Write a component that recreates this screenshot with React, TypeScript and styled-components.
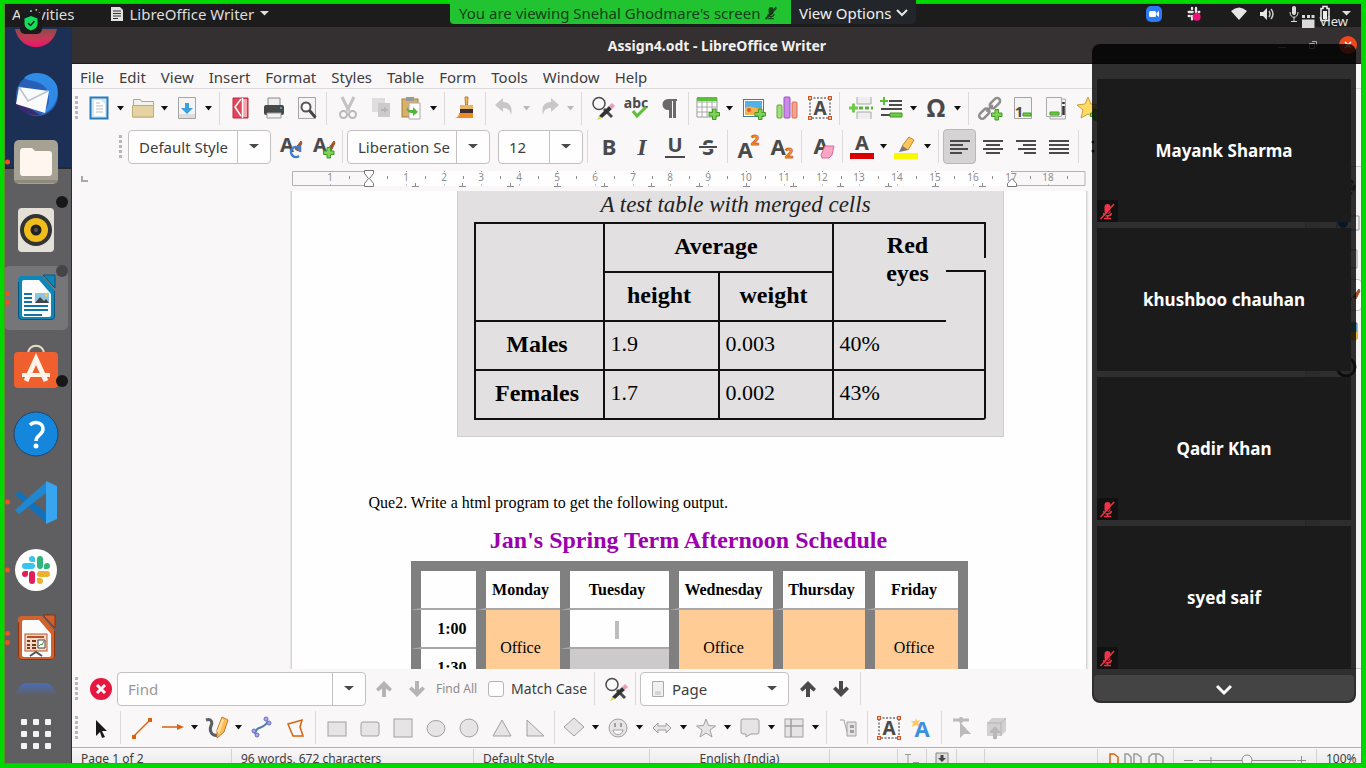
import React from "react";
import styled, { createGlobalStyle } from "styled-components";

const ui = `"Noto Sans", "Open Sans", sans-serif`;
const serif = `"Liberation Serif", serif`;
const ink = "#4a4a4b";

const Global = createGlobalStyle`
  *, *::before, *::after { box-sizing: border-box; }
  body { margin: 0; font-family: ${ui}; font-size: 14px; color: #3d3d3d; background: #f9f7f8; }
  button, input, select { font: inherit; color: inherit; }
  button { padding: 0; border: 0; background: none; }
  svg { display: block; flex: none; overflow: visible; }
`;

/* ---------- shell ---------- */
const Screen = styled.div`
  position: relative;
  display: flex;
  flex-direction: column;
  height: 100vh;
  overflow: hidden;
`;
const ShareFrame = styled.div`
  position: absolute;
  inset: 0;
  z-index: 3;
  pointer-events: none;
  border: 4px solid #00d900;
  border-top-width: 3px;
  box-shadow: inset 0 0 0 1px #5d8f2a;
`;
const TopBar = styled.header`
  display: flex;
  align-items: center;
  flex: none;
  height: 27px;
  padding: 0 15px 0 12px;
  color: #dedede;
  background: #1d1c1c;
  font-size: 15px;
  line-height: 20px;
`;
const TopButton = styled.button`
  display: flex;
  align-items: center;
  gap: 6px;
`;
const AppMenu = styled(TopButton)`
  margin-left: 35px;
`;
const Tray = styled.div`
  display: flex;
  align-items: center;
  margin-left: auto;
`;
const TrayButton = styled.button<{ $gap?: number }>`
  margin-left: ${(p) => p.$gap ?? 12}px;
`;
const Body = styled.div`
  display: flex;
  flex: 1;
  min-height: 0;
`;

/* ---------- dock ---------- */
const Dock = styled.nav`
  display: flex;
  flex-direction: column;
  flex: none;
  width: 72px;
  padding-left: 4px;
  border-right: 1px solid #2c2c2e;
  background: linear-gradient(#1c3055 0 140px, #26282f 140px 142px, #5f5f61 142px);
`;
const DockItem = styled.button<{ $h?: number; $active?: boolean }>`
  position: relative;
  display: flex;
  align-items: ${(p) => (p.$h ? "flex-start" : "center")};
  justify-content: center;
  flex: none;
  width: 64px;
  height: ${(p) => p.$h ?? 68}px;
  border: solid transparent;
  border-width: 2px 0;
  border-radius: 6px;
  background: ${(p) => (p.$active ? "#767678" : "none")};
  background-clip: padding-box;
`;
const Running = styled.span`
  position: absolute;
  left: 1px;
  display: grid;
  gap: 4px;
  top: 50%;
  transform: translateY(-50%);
  i { width: 5px; height: 5px; border-radius: 50%; background: #e95420; }
`;
const DarkDot = styled.span<{ $top: number; $soft?: boolean }>`
  position: absolute;
  right: 0;
  top: ${(p) => p.$top}px;
  width: 12px;
  height: 12px;
  border-radius: 50%;
  background: ${(p) => (p.$soft ? "#454547" : "#171717")};
`;

/* ---------- window ---------- */
const Window = styled.main`
  display: flex;
  flex-direction: column;
  flex: 1;
  min-width: 0;
  padding-right: 4px;
  background: #f9f7f8;
`;
const TitleBar = styled.div`
  display: grid;
  grid-template-columns: 1fr auto 1fr;
  align-items: center;
  flex: none;
  height: 37px;
  color: #f2f1f0;
  background: #343031;
  border-bottom: 1px solid #1f1c1d;
  h1 { grid-column: 2; margin: 2px 0 0; font-size: 14px; line-height: 20px; }
`;
const WinButtons = styled.div`
  display: flex;
  align-items: center;
  justify-content: flex-end;
  gap: 21px;
  padding-right: 5px;
`;
const MenuBar = styled.nav`
  display: flex;
  align-items: center;
  flex: none;
  gap: 15px;
  height: 25px;
  padding: 2px 8px 0;
  border-bottom: 1px solid #dcdadb;
  font-size: 15px;
  line-height: 20px;
`;
const Toolbar = styled.div<{ $indent?: number; $h?: number }>`
  display: flex;
  align-items: center;
  flex: none;
  height: ${(p) => p.$h ?? 39}px;
  padding-left: ${(p) => p.$indent ?? 3}px;
  overflow: hidden;
`;
const Handle = styled.span`
  flex: none;
  width: 3px;
  height: 24px;
  margin-right: 6px;
  background: repeating-linear-gradient(#b9b7b8 0 3px, transparent 3px 5px);
`;
const Plain = styled.button<{ $on?: boolean }>`
  display: grid;
  place-items: center;
  flex: none;
  width: 33px;
  height: 35px;
  border: 1px solid ${(p) => (p.$on ? "#b9b7b8" : "transparent")};
  border-radius: 4px;
  background: ${(p) => (p.$on ? "#d5d3d4" : "none")};
`;
const SplitMain = styled(Plain)`
  width: 29px;
`;
const SplitDrop = styled(Plain)`
  width: 15px;
`;
const Sep = styled.span`
  flex: none;
  width: 1px;
  height: 33px;
  margin: 0 4px 0 3px;
  background: #dcdadb;
`;
const Combo = styled.label<{ $w: number; $gap?: number }>`
  display: flex;
  align-items: center;
  flex: none;
  width: ${(p) => p.$w}px;
  height: 34px;
  margin-right: ${(p) => p.$gap ?? 2}px;
  border: 1px solid #c3c1c2;
  border-radius: 4px;
  background: #fefefe;
  font-size: 15px;
  overflow: hidden;
  select, input {
    flex: 1;
    min-width: 0;
    height: 100%;
    padding: 0 0 0 10px;
    border: 0;
    outline: 0;
    background: transparent;
    appearance: none;
  }
  input::placeholder { color: #9a9899; opacity: 1; }
`;
const ComboArrow = styled.span<{ $bare?: boolean }>`
  display: grid;
  place-items: center;
  width: 33px;
  height: 100%;
  border-left: 1px solid ${(p) => (p.$bare ? "transparent" : "#c3c1c2")};
`;
const FindAll = styled.button`
  margin: 0 11px 0 3px;
  font-size: 12px;
  color: #8e8c8d;
`;
const Check = styled.label`
  display: flex;
  align-items: center;
  gap: 7px;
  margin-right: 4px;
  input {
    width: 16px;
    height: 16px;
    margin: 0;
    border: 1px solid #b7b5b6;
    border-radius: 3px;
    background: #fff;
    appearance: none;
  }
`;

/* ---------- editor ---------- */
const EditorRow = styled.div`
  display: flex;
  flex: 1;
  min-height: 0;
`;
const Editor = styled.div`
  display: flex;
  flex-direction: column;
  flex: 1;
  min-width: 0;
`;
const RulerRow = styled.div`
  position: relative;
  display: flex;
  justify-content: center;
  flex: none;
  height: 25px;
  padding-top: 4px;
`;
const TabCorner = styled.button`
  position: absolute;
  left: 9px;
  top: 10px;
  width: 7px;
  height: 6px;
  border: solid #aaa8a9;
  border-width: 0 0 2px 2px;
`;
const Canvas = styled.div`
  display: flex;
  justify-content: center;
  flex: 1;
  min-height: 0;
  overflow: hidden;
`;
const Page = styled.article`
  flex: none;
  width: 794px;
  height: 1000px;
  background: #fefefe;
  box-shadow: 0 0 2px 1px #c6c4c5;
  color: #000;
  font-family: ${serif};
`;
const Figure = styled.div`
  width: 547px;
  height: 246px;
  margin-left: 165px;
  padding-left: 16px;
  border: 1px solid #cfcdce;
  border-top: 0;
  background: #e2e0e1;
`;
const line = "2px solid #111";
const Merged = styled.table`
  width: 512px;
  table-layout: fixed;
  border-collapse: separate;
  border-spacing: 0;
  border-bottom: ${line};
  border-radius: 0 0 3px 0;
  font-size: 22px;
  line-height: 28px;
  caption { padding-left: 12px; height: 31px; font-size: 23px; font-style: italic; color: #222; }
  tr { height: 49px; }
  th { font-size: 24px; padding: 0 4px 4px 0; }
  td { padding: 0 6px 4px; }
  th, td { border-left: ${line}; border-top: ${line}; }
  tbody td:last-child { border-right: ${line}; }
`;
const RedEyes = styled.th`
  position: relative;
  vertical-align: top;
  &&& { padding-top: 7px; }
  &::before {
    content: "";
    position: absolute;
    top: 46px;
    right: 0;
    bottom: 0;
    width: 40px;
    border: solid #111;
    border-width: 2px 2px 0 0;
  }
  &::after {
    content: "";
    position: absolute;
    top: 0;
    right: 0;
    width: 2px;
    height: 34px;
    background: #111;
  }
`;
const OpenTop = styled.td`
  &&& {
    border-top: 0;
    padding-top: 2px;
    background: linear-gradient(#111, #111) 0 0 / 112px 2px no-repeat;
  }
`;
const Question = styled.p`
  margin: 56px 0 0 77px;
  font-size: 16px;
  line-height: 20px;
`;
const Heading = styled.h2`
  margin: 13px 0 7px;
  font-size: 24px;
  line-height: 28px;
  text-align: center;
  color: #9b00ae;
`;
const wall = "10px solid #808080";
const Schedule = styled.table`
  width: 557px;
  margin-left: 119px;
  table-layout: fixed;
  border-collapse: separate;
  border-spacing: 0;
  border-top: ${wall};
  border-right: ${wall};
  font-size: 16px;
  line-height: 20px;
  tr { height: 39px; }
  th, td { padding: 0 4px 0 0; text-align: center; border-left: ${wall}; border-bottom: 2px solid #a9a7a8; }
  tbody th { padding-right: 9px; text-align: right; }
`;
const Busy = styled.td`
  background: #ffcc96;
`;
const Free = styled.td`
  background: #cccacb;
`;
const Cursor = styled.span`
  display: inline-block;
  width: 4px;
  height: 18px;
  vertical-align: middle;
  background: #bdbbbc;
`;
const Sidebar = styled.aside`
  display: flex;
  flex-direction: column;
  align-items: center;
  flex: none;
  width: 57px;
  padding: 4px 0 0 28px;
  gap: 4px;
  border: solid #c9c7c8;
  border-width: 1px 0 1px 1px;
  background: linear-gradient(90deg, #e4e2e3 0 14px, #f4f2f3 14px);
`;
const Deck = styled.button<{ $on?: boolean }>`
  display: grid;
  place-items: center;
  flex: none;
  width: 28px;
  height: 32px;
  border: 1px solid ${(p) => (p.$on ? "#c3c1c2" : "transparent")};
  border-radius: 4px;
  background: ${(p) => (p.$on ? "#fff" : "none")};
`;

/* ---------- status ---------- */
const StatusBar = styled.footer`
  display: flex;
  flex: none;
  height: 21px;
  padding-top: 1px;
  border-top: 1px solid #b0aeaf;
  font-size: 12px;
  line-height: 20px;
  background: linear-gradient(#f9f7f8, #e9e7e8);
  overflow: hidden;
`;
const Cell = styled.div<{ $w: number; $grow?: boolean; $center?: boolean }>`
  display: flex;
  align-items: center;
  justify-content: ${(p) => (p.$center ? "center" : "flex-start")};
  flex: ${(p) => (p.$grow ? 1 : "none")} ;
  width: ${(p) => p.$w}px;
  height: 20px;
  min-width: 0;
  padding-left: ${(p) => (p.$center ? 0 : 9)}px;
  border-right: 1px solid #d3d1d2;
  white-space: nowrap;
`;

/* ---------- meeting overlays ---------- */
const ShareBanner = styled.div`
  position: absolute;
  z-index: 4;
  top: 0;
  left: 450px;
  display: flex;
  height: 24px;
  font-size: 15px;
  line-height: 24px;
  white-space: nowrap;
`;
const Viewing = styled.div`
  display: flex;
  align-items: center;
  gap: 5px;
  width: 341px;
  padding: 2px 0 0 9px;
  color: #17401b;
  background: #21c331;
  border-radius: 0 0 0 4px;
`;
const ViewOptions = styled.button`
  display: flex;
  align-items: center;
  gap: 5px;
  width: 125px;
  padding: 2px 0 0 8px;
  color: #f0f0f0;
  background: #22262a;
  border-radius: 0 0 4px 0;
`;
const Shield = styled.div`
  position: absolute;
  z-index: 4;
  top: 12px;
  left: 20px;
  display: grid;
  place-items: center;
  width: 22px;
  height: 22px;
  border-radius: 5px;
  background: #1a1a1d;
`;
const ViewMode = styled.button`
  position: absolute;
  z-index: 4;
  top: 12px;
  right: 18px;
  display: flex;
  align-items: center;
  gap: 5px;
  font-size: 13px;
  line-height: 18px;
  color: #e4e4e4;
`;
const Gallery = styled.aside`
  position: absolute;
  z-index: 2;
  top: 44px;
  right: 10px;
  display: flex;
  flex-direction: column;
  gap: 6px;
  width: 264px;
  padding: 35px 5px 2px;
  border-radius: 8px;
  background: rgba(0, 0, 0, 0.81);
`;
const Tile = styled.section`
  position: relative;
  display: grid;
  place-items: center;
  height: 143px;
  color: #fff;
  background: #1b1b1b;
  font-size: 17px;
  font-weight: 700;
  line-height: 24px;
`;
const Muted = styled.span`
  position: absolute;
  left: 0;
  bottom: 0;
  display: grid;
  place-items: center;
  width: 21px;
  height: 22px;
  background: #111;
`;
const More = styled.button`
  display: grid;
  place-items: center;
  height: 26px;
  margin: 0 -3px;
  padding-top: 4px;
  border-radius: 4px 4px 7px 7px;
  background: #444;
`;

/* ---------- icons ---------- */
type Kids = { children: React.ReactNode; s?: number };
const I = ({ children, s = 24 }: Kids) => (
  <svg width={s} height={s} viewBox="0 0 24 24" fill="none" aria-hidden="true">
    {children}
  </svg>
);
const Tri = ({ c = "#111", w = 7 }: { c?: string; w?: number }) => (
  <svg width={w} height="5" viewBox="0 0 7 5" preserveAspectRatio="none" aria-hidden="true">
    <path d="M0 0H7L3.5 4.5Z" fill={c} />
  </svg>
);
const Plus = ({ x = 12, y = 12 }: { x?: number; y?: number }) => (
  <path
    transform={`translate(${x} ${y})`}
    d="M4 .5h3.500v3.500h3.500v3.500h-3.500v3.500h-3.500v-3.500h-3.500v-3.500h3.500z"
    fill="#7fd257"
    stroke="#3f9a1f"
  />
);
const T = (p: { x: number; y: number; s: number; c?: string; t: string; i?: boolean; st?: string; f?: string }) => (
  <text
    x={p.x}
    y={p.y}
    fontSize={p.s}
    fontWeight="700"
    fontStyle={p.i ? "italic" : "normal"}
    fontFamily={p.f ?? "Noto Sans"}
    fill={p.c ?? ink}
    stroke={p.st}
    textAnchor="middle"
  >
    {p.t}
  </text>
);
const Corners = () => (
  <>
    <rect x="2" y="2" width="20" height="20" stroke="#333" strokeDasharray="2 1.500" />
    {[[2, 2], [22, 2], [2, 22], [22, 22]].map(([x, y]) => (
      <rect key={`${x}-${y}`} x={x - 1.5} y={y - 1.5} width="3" height="3" fill="#ffc08a" stroke="#d0562a" />
    ))}
  </>
);
const Lines = ({ r }: { r: number[][] }) => (
  <>
    {r.map(([x, y, w], k) => (
      <path key={k} d={`M${x} ${y}h${w}`} stroke={ink} strokeWidth="2" />
    ))}
  </>
);
const findReplace = (
  <>
    <circle cx="8" cy="7.500" r="6" stroke={ink} strokeWidth="1.500" />
    <path d="M13 13l8 8" stroke={ink} strokeWidth="3" />
    <path d="M8 20L18 10l3 3-10 9z" fill="#333" />
    <path d="M18 10l3-3 3 3-3 3z" fill="#e99ac0" />
    <path d="M8 20l3 2-5 2z" fill="#d9d94a" />
  </>
);
const undo = <path d="M2 9l8-7v4c7 0 10 5 8 13-1-5-3-7-8-7v4z" fill="#c9c7c8" />;
const up = <path d="M12 4l8 8-2.500 2.500-3.500-3V20h-4v-8.500l-3.500 3L4 12z" />;
const paper = <path d="M3.500 1.500h17v21h-17z" fill="#f4f4f4" stroke="#a5a5a5" />;
const pencil = (
  <>
    <path d="M1 4c5-2 7 2 5 6s0 11 8 9" stroke="#5a5f63" strokeWidth="3" />
    <path d="M12 14L17 1l6 3-4 12-7 6z" fill="#ffb955" stroke="#c57a2a" />
    <path d="M12 15l5-12 2 1-5 14z" fill="#ffdf9c" />
  </>
);
const brush = <path d="M17 14l6-8 1 2-4 8z" fill="#a0522d" stroke="#a0522d" />;

type Tool = { n: string; g: React.ReactNode; d?: boolean; on?: boolean; c?: string } | "|";
const Tools = ({ items }: { items: Tool[] }) => (
  <>
    {items.map((it, k) => {
      if (it === "|") return <Sep key={k} />;
      if (it.d)
        return (
          <React.Fragment key={k}>
            <SplitMain aria-label={it.n}><I>{it.g}</I></SplitMain>
            <SplitDrop aria-label={`${it.n} options`}><Tri c={it.c} /></SplitDrop>
          </React.Fragment>
        );
      return <Plain key={k} aria-label={it.n} $on={it.on}><I>{it.g}</I></Plain>;
    })}
  </>
);

const standard: Tool[] = [
  { n: "New", d: true, g: <><rect x="3.500" y="1.500" width="17" height="21" fill="#cfe6f5" stroke="#2a7ab8" strokeWidth="2" /><path d="M7 4h7l4 4v12H7z" fill="#fff" /><path d="M9 7h4M9 10h7M9 13h7M9 16h7" stroke="#bbb" /></> },
  { n: "Open", d: true, g: <><path d="M2.500 21V3.500h7l1 2h12V21z" fill="#f4f2ee" stroke="#b0a58f" /><path d="M1.500 9.500h21V21h-21z" fill="#e6d3a3" stroke="#c2ab74" /></> },
  { n: "Save", d: true, g: <>{paper}<path d="M4 18h16v4H4z" fill="#ddd" /><path d="M10 7h4v5h4l-6 6-6-6h4z" fill="#3c9fe0" /></> },
  "|",
  { n: "Export as PDF", g: <><path d="M4 2h15v20H4z" fill="#e0455a" stroke="#c0283f" /><path d="M14 3h4v18h-4z" fill="#f7a3ae" /><path d="M12 3L6 11l6 9M13.500 2v20" stroke="#fff" strokeWidth="1.500" /></> },
  { n: "Print", g: <><path d="M6 2h12v8H6z" fill="#eee" stroke="#888" /><rect x="2" y="9" width="20" height="10" rx="2" fill="#46484a" /><path d="M5 17h14v5H5z" fill="#f3f3f3" stroke="#999" /><circle cx="19" cy="12" r="1" fill="#3fc0f0" /></> },
  { n: "Print Preview", g: <>{paper}<circle cx="11" cy="11" r="4.500" stroke="#555" strokeWidth="2" fill="#fff" /><path d="M14.500 14.500l6 7" stroke="#444" strokeWidth="3" /></> },
  "|",
  { n: "Cut", g: <><path d="M6 1l7 14M18 1l-7 14" stroke="#c4c2c3" strokeWidth="3" /><circle cx="7.500" cy="18.500" r="3.500" stroke="#b9b7b8" strokeWidth="2" /><circle cx="16.500" cy="18.500" r="3.500" stroke="#b9b7b8" strokeWidth="2" /></> },
  { n: "Copy", g: <><path d="M3 2h13v14H3z" fill="#dfddde" /><path d="M9 7h12v14H9z" fill="#cccacb" /><path d="M12 13h3v-2l4 3-4 3v-2h-3z" fill="#b5b3b4" /></> },
  { n: "Paste", d: true, g: <><rect x="2" y="3" width="16" height="18" fill="#d9b06a" stroke="#a97f3a" /><rect x="6" y="1" width="8" height="4" fill="#999" /><path d="M9 7h11v16H9z" fill="#fff" stroke="#aaa" /><path d="M7 11c1 4 4 3 6 3v-3l5 5-5 4v-3c-5 0-7-2-6-6z" fill="#4fb53a" /></> },
  "|",
  { n: "Clone Formatting", g: <><path d="M11 1h3l-.5 8h-2z" fill="#f0b85a" stroke="#b9812c" /><path d="M6 9h13v5H6z" fill="#e7b565" /><path d="M6 13h13v4H6z" fill="#3a2e33" /><path d="M5 17h14v5H1c3-1 4-2 4-5z" fill="#f08a24" /></> },
  "|",
  { n: "Undo", d: true, c: "#bbb9ba", g: undo },
  { n: "Redo", d: true, c: "#bbb9ba", g: <g transform="matrix(-1 0 0 1 24 0)">{undo}</g> },
  "|",
  { n: "Find and Replace", g: findReplace },
  { n: "Spelling", g: <><T x={12} y={12} s={14} t="abc" /><path d="M9 15l4 5 9-9" stroke="#5cbf3a" strokeWidth="3" /></> },
  { n: "Formatting Marks", g: <path d="M20 3H11a5 5 0 0 0 0 11h1v8h3V5h1v17h3V5h1z" fill="#6a6a6b" /> },
  "|",
  { n: "Insert Table", d: true, g: <><path d="M1 2h20v19H1z" fill="#fff" stroke="#999" /><path d="M1 6h20M1 11h20M1 16h20M6 2v19M11 2v19M16 2v19" stroke="#aaa" /><path d="M1 1h20v4H1z" fill="#5cbf3a" /><Plus x={12.5} y={12.5} /></> },
  { n: "Insert Image", g: <><rect x="1.500" y="3.500" width="20" height="17" fill="#fff" stroke="#3a7cab" /><path d="M3 5h17v8H3z" fill="#4fb3e8" /><path d="M3 12c6-4 11 2 17 0v7H3z" fill="#f4b04a" /><circle cx="7" cy="14" r="2" fill="#e2582c" /><Plus x={12.5} y={12.5} /></> },
  { n: "Insert Chart", g: <><rect x="2" y="9" width="5" height="13" rx="1" fill="#a6dd7e" stroke="#5aa834" /><rect x="9" y="1" width="6" height="21" rx="1" fill="#c98be6" stroke="#9b4fc4" /><rect x="17" y="6" width="5" height="16" rx="1" fill="#f5a58e" stroke="#dd6a4b" /></> },
  { n: "Insert Text Box", g: <><Corners /><T x={12} y={19} s={19} t="A" /></> },
  "|",
  { n: "Page Break", g: <><path d="M8 1v7h14V1M8 23v-7h14v7" fill="#eee" stroke="#aaa" /><path d="M10 12h14" stroke="#58b336" strokeWidth="3" strokeDasharray="4 2" /><path d="M0 10.500h3v-3h3v3h3v3H6v3H3v-3H0z" fill="#6fc94a" /></> },
  { n: "Insert Field", d: true, g: <><Lines r={[[9, 5, 13], [9, 9, 13], [1, 13, 21], [1, 19, 9]]} /><path d="M0 4h3V1h2v3h3v2H5v3H3V6H0z" fill="#5cbf3a" /><path d="M10 17h12v4H10z" fill="#6fc94a" stroke="#3f9a1f" /></> },
  { n: "Special Character", d: true, g: <T x={12} y={21} s={25} t="Ω" /> },
  "|",
  { n: "Hyperlink", g: <><g transform="rotate(-45 12 12)" stroke="#8d8d8e" strokeWidth="2.500"><rect x="-2" y="9" width="12" height="6" rx="3" /><rect x="13" y="9" width="12" height="6" rx="3" /><path d="M7 12h9" /></g><Plus x={13} y={13} /></> },
  { n: "Footnote", g: <>{paper}<T x={8} y={21} s={15} t="1" /><path d="M12 17h8v3h-8z" fill="#6fc94a" stroke="#3f9a1f" /></> },
  { n: "Endnote", g: <><path d="M6 3h15.500v20H6z" fill="#eee" stroke="#aaa" /><path d="M2.500 1.500h15v19h-15z" fill="#f6f6f6" stroke="#aaa" /><path d="M6 16h9v3H6z" fill="#6fc94a" stroke="#3f9a1f" /><path d="M19.500 10v9M19.500 6v2" stroke="#333" strokeWidth="2.500" /></> },
  { n: "Bookmark", g: <><path d="M11 1l3 7 8 1-6 5 2 8-7-4-7 4 2-8-6-5 8-1z" fill="#ffdb62" stroke="#cf9a3c" /><Plus x={13} y={13} /></> },
];

const formatting: Tool[] = [
  { n: "Bold", g: <T x={12} y={20} s={22} t="B" /> },
  { n: "Italic", g: <T x={12} y={20} s={24} t="I" i f="Liberation Serif" /> },
  { n: "Underline", g: <><T x={12} y={17} s={20} t="U" /><path d="M2 22h20" stroke={ink} strokeWidth="2" /></> },
  { n: "Strikethrough", g: <><T x={12} y={20} s={22} t="S" /><path d="M3 12h18" stroke="#f9f7f8" strokeWidth="4" /><path d="M3 12h18" stroke={ink} strokeWidth="2" /></> },
  "|",
  { n: "Superscript", g: <><T x={8} y={23} s={22} t="A" /><T x={18} y={10} s={14} t="2" c="#f6a52c" st="#d9661a" /></> },
  { n: "Subscript", g: <><T x={8} y={20} s={22} t="A" /><T x={19} y={23} s={14} t="2" c="#f6a52c" st="#d9661a" /></> },
  "|",
  { n: "Clear Formatting", g: <><T x={10} y={19} s={22} t="A" /><path d="M10 20l4-9h9l-2 9-3 3h-7z" fill="#f8a5c6" stroke="#d96a9b" /></> },
  "|",
  { n: "Font Color", d: true, g: <><T x={12} y={15} s={20} t="A" /><path d="M0 18h24v6H0z" fill="#d90000" /></> },
  { n: "Highlighting", d: true, g: <><path d="M8 11l7-9 5 3-6 10z" fill="#fbc65a" stroke="#c4872e" /><path d="M8 11l6 4-4 1-5 1z" fill="#777" /><path d="M0 18h24v6H0z" fill="#f8f800" /></> },
  "|",
  { n: "Align Left", on: true, g: <Lines r={[[2, 6, 20], [2, 10, 13], [2, 14, 18], [2, 18, 12]]} /> },
  { n: "Center", g: <Lines r={[[2, 6, 20], [5, 10, 14], [2, 14, 20], [5, 18, 14]]} /> },
  { n: "Align Right", g: <Lines r={[[2, 6, 20], [9, 10, 13], [4, 14, 18], [10, 18, 12]]} /> },
  { n: "Justified", g: <Lines r={[[2, 6, 20], [2, 10, 20], [2, 14, 20], [2, 18, 20]]} /> },
  "|",
  { n: "Bullets", g: <><Lines r={[[9, 6, 14], [9, 10, 14], [9, 14, 14], [9, 18, 14]]} /><circle cx="5" cy="7" r="1.500" fill="#333" /><circle cx="5" cy="16" r="1.500" fill="#333" /></> },
];

const sh = { fill: "#e6e4e5", stroke: "#a19fa0" };
const drawing: Tool[] = [
  { n: "Select", g: <path d="M7 4v16l4-4 2 6 3-1-3-6h5z" fill="#1a1a1a" /> },
  "|",
  { n: "Line", g: <><path d="M4 20L20 4" stroke="#d9620f" strokeWidth="1.500" /><path d="M2 19h4v4H2zM18 2h4v4h-4z" fill="#d9620f" /></> },
  { n: "Arrow", d: true, g: <><path d="M1 11h16" stroke="#d9620f" strokeWidth="1.500" /><path d="M16 8l7 3-7 3z" fill="#d9620f" /></> },
  { n: "Curve", d: true, g: pencil },
  { n: "Connector", g: <><path d="M4 18C6 8 12 15 17 5" stroke="#4f7fa8" strokeWidth="2" /><circle cx="3" cy="15" r="2" fill="#a5a7ea" stroke="#6a6cc0" /><circle cx="6" cy="19" r="2" fill="#a5a7ea" stroke="#6a6cc0" /><circle cx="15" cy="3" r="2" fill="#a5a7ea" stroke="#6a6cc0" /><circle cx="18" cy="7" r="2" fill="#a5a7ea" stroke="#6a6cc0" /></> },
  { n: "Polygon", g: <path d="M4 8l14-4-2 7 3 9H9z" stroke="#d9620f" strokeWidth="1.500" /> },
  "|",
  { n: "Rectangle", g: <rect x="3" y="6" width="18" height="14" {...sh} /> },
  { n: "Rounded Rectangle", g: <rect x="3" y="6" width="18" height="14" rx="2" {...sh} /> },
  { n: "Square", g: <rect x="3" y="3" width="18" height="18" {...sh} /> },
  { n: "Ellipse", g: <ellipse cx="12" cy="12.500" rx="9" ry="8" {...sh} /> },
  { n: "Circle", g: <circle cx="12" cy="12" r="9" {...sh} /> },
  { n: "Triangle", g: <path d="M12 4l9 16H3z" {...sh} /> },
  { n: "Right Triangle", g: <path d="M4 4l17 16H4z" {...sh} /> },
  "|",
  { n: "Basic Shapes", d: true, g: <path d="M12 2l10 9-10 9-10-9z" {...sh} /> },
  { n: "Symbol Shapes", d: true, g: <><circle cx="12" cy="12" r="9" {...sh} /><path d="M7 14h10c-1 6-9 6-10 0z" fill="#fff" stroke="#a19fa0" /><path d="M9 7v4M15 7v4" stroke="#a19fa0" strokeWidth="2" /></> },
  { n: "Block Arrows", d: true, g: <path d="M3 12l5-5v3h8V7l5 5-5 5v-3H8v3z" {...sh} /> },
  { n: "Stars", d: true, g: <path d="M12 3l2.500 6.500 7 .5-5.500 4 2 7-6-4-6 4 2-7-5.500-4 7-.5z" {...sh} /> },
  { n: "Callouts", d: true, g: <path d="M5 3h14q2 0 2 2v11q0 2-2 2h-6l-5 3v-3H5q-2 0-2-2V5q0-2 2-2z" {...sh} /> },
  { n: "Flowchart", d: true, g: <><rect x="3" y="3" width="18" height="18" {...sh} /><path d="M9 3v18M3 10h18" stroke="#a19fa0" strokeWidth="1.500" /></> },
  "|",
  { n: "Callout Line", g: <><path d="M4 4h4l3 12h2" stroke="#a19fa0" /><path d="M11 6h9v14h-9z" {...sh} /><path d="M14 9h4v3h-4zM14 14h4v3h-4z" fill="#a19fa0" /></> },
  "|",
  { n: "Text Box", g: <><Corners /><T x={12} y={19} s={19} t="A" /></> },
  { n: "Fontwork", g: <><path d="M6 2l1 3 4-1-3 3 2 4-4-2-4 2 1-4-2-2 4 0z" fill="#ffc95e" /><T x={12} y={21} s={22} t="A" c="#3f8fe0" /></> },
  "|",
  { n: "Edit Points", g: <><path d="M2 4h16M10 1v6" stroke="#bbb" strokeWidth="3" /><path d="M9 6v16l4-4h7z" fill="#bbb" /></> },
  { n: "Extrusion", g: <><path d="M3 7l5-5h14v13l-5 5H3z" fill="#d2d0d1" /><path d="M3 7h14v13M17 7l5-5" stroke="#b5b3b4" /><path d="M11 10l6 7h-4v6H9v-6H5z" fill="#b9b7b8" /></> },
];

const MicOff = ({ c, s = 15 }: { c: string; s?: number }) => (
  <svg width={s} height={s + 2} viewBox="0 0 15 17" fill="none" aria-hidden="true">
    <rect x="4.500" y="1" width="6" height="10" rx="3" fill={c} />
    <path d="M3.500 10c1 4 7 4 8 0M7.500 12v3M4 15.500h7" stroke={c} strokeWidth="1.500" />
    <path d="M1.500 16.500L14.500 2.500" stroke="#111" strokeWidth="1.500" strokeOpacity="0.600" />
    <path d="M.5 16L14 1" stroke={c} strokeWidth="1.500" />
  </svg>
);

const SlackMark = () => (
  <>
    {[0, 90, 180, 270].map((r, k) => (
      <g key={r} transform={`rotate(${r} 24 24)`} fill={["#36c5f0", "#2eb67d", "#ecb22e", "#e01e5a"][k]}>
        <rect x="10" y="17" width="13" height="6" rx="3" />
        <path d="M23 16h-3a3 3 0 1 1 3-3z" />
      </g>
    ))}
  </>
);

const D = ({ children }: { children: React.ReactNode }) => (
  <svg width="48" height="48" viewBox="0 0 48 48" fill="none" aria-hidden="true">{children}</svg>
);
const officeDoc = (c: string, dark: string) => (
  <>
    <path d="M10 2h20l13 15v25q0 4-4 4H10q-4 0-4-4V6q0-4 4-4z" fill={c} />
    <path d="M31 1h12v13z" fill={c} stroke={dark} />
    <path d="M10 8q0-2 2-2h15l12 14v21q0 2-2 2H12q-2 0-2-2z" fill="#fcfcfc" />
    <path d="M6.500 8V42q0 3.500 3.500 3.500h29q3.500 0 3.500-3.500V17" stroke={dark} />
  </>
);

const ruler = Array.from({ length: 20 }, (_, k) => k - 1);
const Ruler = () => (
  <svg width="794" height="20" viewBox="0 0 794 20" fontFamily="Noto Sans" fontSize="10" textAnchor="middle" aria-label="Ruler">
    <rect x="76" y="1" width="644" height="15" fill="#fefefe" />
    <path d="M76 1.500H.5v14H76M720 1.500h73v14h-73" fill="none" stroke="#b3b1b2" />
    {ruler.map((n) => {
      const x = Math.round(76 + n * 37.8);
      return (
        <g key={n} stroke="none" fill="#8f8d8e">
          {n !== 0 && <text x={x} y="11">{Math.abs(n)}</text>}
          <path d={`M${x} 14.500h1v1h-1zM${x} 1h1v1h-1z`} />
          {x + 19 < 790 && <path d={`M${x + 19} 6h1v3h-1z`} />}
        </g>
      );
    })}
    {Array.from({ length: 13 }, (_, k) => Math.round(123 + k * 47.25)).map((x) => (
      <path key={x} d={`M${x - 3} 16.500h7M${x + 0.5} 13v4`} stroke="#8f8d8e" />
    ))}
    <path d="M72.500.5h9v3l-4 5 4 5v3h-9v-3l4-5-4-5z" fill="#fff" stroke="#777" />
    <path d="M715.500 16.500v-3l4.500-5 4.500 5v3z" fill="#fff" stroke="#777" />
  </svg>
);

const names = [
  { name: "Mayank Sharma", muted: true },
  { name: "khushboo chauhan", muted: false },
  { name: "Qadir Khan", muted: true },
  { name: "syed saif", muted: true },
];

export default function App() {
  return (
    <Screen>
      <Global />
      <TopBar>
        <TopButton>Activities</TopButton>
        <AppMenu>
          <svg width="14" height="14" viewBox="0 0 14 14" aria-hidden="true">
            <path d="M1 0h9l3 3v11H1z" fill="#e2e2e2" />
            <path d="M3 4h8M3 6.500h8M3 9h8M3 11.500h5" stroke="#333" />
          </svg>
          LibreOffice Writer
          <Tri c="#dedede" w={9} />
        </AppMenu>
        <Tray>
          <TrayButton aria-label="Zoom">
            <svg width="16" height="16" viewBox="0 0 16 16"><rect width="16" height="16" rx="5" fill="#2d7bf4" /><rect x="3" y="5" width="7" height="6" rx="1.500" fill="#fff" /><path d="M10.500 7L13 5v6l-2.500-2z" fill="#fff" /></svg>
          </TrayButton>
          <TrayButton aria-label="Slack" $gap={24}>
            <svg width="16" height="16" viewBox="0 0 48 48"><g stroke="#e8e8e8" strokeWidth="7" strokeLinecap="round"><path d="M8 18h12M18 6v3M30 6v12M38 18h2M8 30h3M18 30v10" /></g><circle cx="32" cy="32" r="12" fill="#f4107a" /></svg>
          </TrayButton>
          <TrayButton aria-label="Wi-Fi" $gap={29}>
            <svg width="16" height="14" viewBox="0 0 16 14"><path d="M0 4q8-7 16 0L8 13z" fill="#e6e6e6" /></svg>
          </TrayButton>
          <TrayButton aria-label="Volume">
            <svg width="16" height="14" viewBox="0 0 16 14" fill="none"><path d="M1 5h3l4-4v12L4 9H1z" fill="#e6e6e6" /><path d="M10 4q2 3 0 6M12 2q4 5 0 10" stroke="#c9c9c9" strokeWidth="1.500" /></svg>
          </TrayButton>
          <TrayButton aria-label="Microphone">
            <svg width="14" height="16" viewBox="0 0 14 16" fill="none"><rect x="5" y="0" width="4" height="9" rx="2" fill="#ddd" /><path d="M3 6c0 7 8 7 8 0M7 11v4M4 15.500h6" stroke="#ddd" /></svg>
          </TrayButton>
          <TrayButton aria-label="Battery" $gap={19}>
            <svg width="10" height="16" viewBox="0 0 10 16" fill="none"><path d="M1 2.500h2V.5h4v2h2v12H1z" stroke="#eee" strokeWidth="1.500" /><path d="M3 5h4v8H3z" fill="#eee" /></svg>
          </TrayButton>
          <TrayButton aria-label="System menu"><Tri c="#dedede" w={9} /></TrayButton>
        </Tray>
      </TopBar>

      <Body>
        <Dock aria-label="Dock">
          <DockItem $h={33} aria-label="Firefox">
            <svg width="44" height="20" viewBox="0 0 44 20"><defs><linearGradient id="fox" x2="0" y2="1"><stop stopColor="#8a4a4c" /><stop offset="0.500" stopColor="#c43a55" /><stop offset="1" stopColor="#f0106a" /></linearGradient></defs><path d="M1 0h42c-2 10-10 18-21 18S3 10 1 0z" fill="url(#fox)" /></svg>
          </DockItem>
          <DockItem aria-label="Thunderbird">
            <D><circle cx="25" cy="25" r="21" fill="#2a5fb8" /><path d="M12 8C20-1 40 2 45 16c3 12-4 25-16 29 9-8 10-18 5-27-6-8-16-6-22-10z" fill="#2f8be6" /><path d="M2 28c3 12 14 19 26 17L8 32z" fill="#3a2a6e" /><path d="M7 17l30 4-4 22-29-9z" fill="#fafafa" /><path d="M7 17l9 14 20-10" stroke="#b9c3cc" strokeWidth="1.500" /></D>
          </DockItem>
          <DockItem aria-label="Files">
            <Running><i /></Running>
            <D><rect x="2" y="2" width="44" height="44" rx="5" fill="#a5a193" /><rect x="3" y="42" width="42" height="3" rx="1" fill="#8d897c" /><path d="M8 14q0-4 3-4h9l3 3h14q3 0 3 3v19q0 3-3 3H11q-3 0-3-3z" fill="#fff6f0" /></D>
          </DockItem>
          <DockItem aria-label="Rhythmbox">
            <DarkDot $top={-2} />
            <D><rect x="6" y="2" width="36" height="44" rx="4" fill="#e4e0d8" /><circle cx="24" cy="24" r="16" fill="#333" /><circle cx="24" cy="24" r="12" fill="#efbd1c" /><circle cx="24" cy="24" r="5.500" fill="#222" /><circle cx="24" cy="24" r="2" fill="#555" /></D>
          </DockItem>
          <DockItem $active aria-label="LibreOffice Writer">
            <DarkDot $top={-1} $soft />
            <Running><i /><i /></Running>
            <D>{officeDoc("#0f86b8", "#0a5580")}<path d="M12 20h8M12 24h8M12 28h8M12 32h24M12 36h24M12 41h18" stroke="#1273a6" strokeWidth="2" /><path d="M23 19h14v10H23z" fill="#8fc4e0" /><path d="M23 29l5-6 4 4 2-2 3 4z" fill="#444" /><circle cx="34" cy="21" r="1.500" fill="#f4cf4a" /></D>
          </DockItem>
          <DockItem aria-label="Ubuntu Software">
            <DarkDot $top={41} />
            <D><path d="M16 12c0-11 16-11 16 0" stroke="#e9dcc4" strokeWidth="2" /><rect x="2" y="10" width="44" height="36" rx="4" fill="#f0602e" /><path d="M14 39L24 17l10 22" stroke="#fff3ea" strokeWidth="5" /><path d="M10 33h28" stroke="#fff3ea" strokeWidth="4" /></D>
          </DockItem>
          <DockItem aria-label="Help">
            <D><circle cx="24" cy="24" r="22" fill="#1486dc" stroke="#22436a" /><path d="M18 15c4-4 13-3 13 4 0 6-7 6-7 12" stroke="#fff" strokeWidth="3.500" /><circle cx="24" cy="36" r="2.500" fill="#fff" /></D>
          </DockItem>
          <DockItem aria-label="Visual Studio Code">
            <Running><i /></Running>
            <D><path d="M3 17l4-4 28 22v11z" fill="#1670b8" /><path d="M3 32l4 4 28-22V3z" fill="#2088d0" /><path d="M34 3l11 5v33l-11 5z" fill="#38a5ee" /></D>
          </DockItem>
          <DockItem aria-label="Slack">
            <Running><i /></Running>
            <D><circle cx="24" cy="24" r="21" fill="#fff" /><SlackMark /></D>
          </DockItem>
          <DockItem aria-label="LibreOffice Impress">
            <Running><i /><i /></Running>
            <D>{officeDoc("#d0622f", "#8a3310")}<rect x="13" y="20" width="22" height="17" fill="#f8d9c4" stroke="#b5522a" /><path d="M15 23h17" stroke="#b5522a" strokeWidth="2" /><path d="M15 27h3M15 31h3M15 34h3M20 27h4M20 31h4M20 34h4" stroke="#7a3a1c" strokeWidth="2" /><path d="M26 26h7v8h-7z" fill="#fff" stroke="#444" /><path d="M27 32l2-2 1 1 2-4" stroke="#3a9a3a" /><path d="M18 42l6-4 6 4" stroke="#555" strokeWidth="2" /></D>
          </DockItem>
          <DockItem $h={28} aria-label="More windows">
            <svg width="44" height="22" viewBox="0 0 44 22"><defs><linearGradient id="fade" x2="0" y2="1"><stop stopColor="#4a6db8" /><stop offset="1" stopColor="#5f5f61" /></linearGradient></defs><path d="M0 21q6-12 12-12h20q6 0 12 12z" fill="url(#fade)" /></svg>
          </DockItem>
          <DockItem aria-label="Show Applications">
            <svg width="32" height="32" viewBox="0 0 32 32">{[1, 13, 25].map((y) => [1, 13, 25].map((x) => <rect key={`${x}-${y}`} x={x} y={y} width="6" height="6" rx="1" fill="#f3f3f3" />))}</svg>
          </DockItem>
        </Dock>

        <Window>
          <TitleBar>
            <h1>Assign4.odt - LibreOffice Writer</h1>
            <WinButtons>
              <button aria-label="Minimize"><svg width="10" height="10"><path d="M1 7.500h8" stroke="#999" /></svg></button>
              <button aria-label="Restore"><svg width="10" height="10" fill="none"><path d="M1.500 3.500h5v5h-5zM4 1.500h4.500V6" stroke="#aaa" /></svg></button>
              <button aria-label="Close"><svg width="18" height="18" fill="none"><circle cx="9" cy="9" r="9" fill="#f0471c" /><path d="M6 6l6 6M12 6l-6 6" stroke="#fff" strokeWidth="1.500" /></svg></button>
            </WinButtons>
          </TitleBar>
          <MenuBar>
            {["File", "Edit", "View", "Insert", "Format", "Styles", "Table", "Form", "Tools", "Window", "Help"].map((m) => (
              <button key={m}>{m}</button>
            ))}
          </MenuBar>
          <Toolbar $h={38}><Handle /><Tools items={standard} /></Toolbar>
          <Toolbar $indent={47}>
            <Handle />
            <Combo $w={143}>
              <select aria-label="Paragraph Style"><option>Default Style</option></select>
              <ComboArrow><Tri c={ink} w={10} /></ComboArrow>
            </Combo>
            <Tools items={[
              { n: "Update Style", g: <><T x={9} y={17} s={20} t="A" />{brush}<path d="M21 13a5 5 0 1 0 0 8M17 12h5v5" stroke="#3b7fd0" strokeWidth="2.500" /></> },
              { n: "New Style", g: <><T x={9} y={17} s={20} t="A" />{brush}<Plus x={12} y={12} /></> },
              "|",
            ]} />
            <Combo $w={143} $gap={8}>
              <select aria-label="Font Name"><option>Liberation Se</option></select>
              <ComboArrow><Tri c={ink} w={10} /></ComboArrow>
            </Combo>
            <Combo $w={85} $gap={1}>
              <select aria-label="Font Size"><option>12</option></select>
              <ComboArrow><Tri c={ink} w={10} /></ComboArrow>
            </Combo>
            <Tools items={["|", ...formatting]} />
          </Toolbar>

          <EditorRow>
            <Editor>
              <RulerRow><TabCorner aria-label="Tab type" /><Ruler /></RulerRow>
              <Canvas>
                <Page>
                  <Figure>
                    <Merged>
                      <colgroup><col style={{ width: 129 }} /><col style={{ width: 115 }} /><col style={{ width: 114 }} /><col /></colgroup>
                      <caption>A test table with merged cells</caption>
                      <thead>
                        <tr><th rowSpan={2} /><th colSpan={2}>Average</th><RedEyes rowSpan={2}>Red<br />eyes</RedEyes></tr>
                        <tr><th>height</th><th>weight</th></tr>
                      </thead>
                      <tbody>
                        <tr><th>Males</th><td>1.9</td><td>0.003</td><OpenTop>40%</OpenTop></tr>
                        <tr><th>Females</th><td>1.7</td><td>0.002</td><td>43%</td></tr>
                      </tbody>
                    </Merged>
                  </Figure>
                  <Question>Que2. Write a html program to get the following output.</Question>
                  <Heading>Jan's Spring Term Afternoon Schedule</Heading>
                  <Schedule>
                    <colgroup>{[65, 84, 109, 104, 92, 93].map((w, k) => <col key={k} style={{ width: w }} />)}</colgroup>
                    <thead>
                      <tr><th /><th>Monday</th><th>Tuesday</th><th>Wednesday</th><th>Thursday</th><th>Friday</th></tr>
                    </thead>
                    <tbody>
                      <tr><th>1:00</th><Busy rowSpan={2}>Office</Busy><td><Cursor /></td><Busy rowSpan={2}>Office</Busy><Busy rowSpan={2} /><Busy rowSpan={2}>Office</Busy></tr>
                      <tr><th>1:30</th><Free /></tr>
                    </tbody>
                  </Schedule>
                </Page>
              </Canvas>
            </Editor>
            <Sidebar>
              <Deck aria-label="Sidebar Settings"><I><circle cx="10" cy="12" r="8" stroke="#777" strokeWidth="3" strokeDasharray="4 2" /><circle cx="10" cy="12" r="6" stroke="#777" /></I></Deck>
              <Deck aria-label="Toggle"><I><path d="M1 5h22v14H1z" stroke="#999" /><circle cx="7" cy="12" r="5" fill="#2a7ab8" /></I></Deck>
              <Deck aria-label="Properties"><I><path d="M3 3h18v18H3z" stroke="#999" /></I></Deck>
              <Deck $on aria-label="Styles"><I><T x={9} y={17} s={20} t="A" />{brush}</I></Deck>
              <Deck aria-label="Gallery"><I><path d="M3 4h18v16H3z" fill="#4fb3e8" stroke="#777" /><path d="M3 13h18v7H3z" fill="#f4b04a" /></I></Deck>
              <Deck aria-label="Navigator"><I><circle cx="10" cy="12" r="9" fill="#ddd" stroke="#444" strokeWidth="3" /><path d="M14 8l-3 6-5 2 3-6z" fill="#555" /></I></Deck>
            </Sidebar>
          </EditorRow>

          <Toolbar>
            <Handle />
            <Plain aria-label="Close Find Bar"><svg width="22" height="22" fill="none"><circle cx="11" cy="11" r="11" fill="#e8173f" /><path d="M7 7l8 8M15 7l-8 8" stroke="#fff" strokeWidth="3" /></svg></Plain>
            <Combo $w={249} $gap={1}>
              <input aria-label="Find" placeholder="Find" />
              <ComboArrow><Tri c={ink} w={10} /></ComboArrow>
            </Combo>
            <Tools items={[
              { n: "Find Previous", g: <g fill="#b5b3b4">{up}</g> },
              { n: "Find Next", g: <g fill="#b5b3b4" transform="rotate(180 12 12)">{up}</g> },
            ]} />
            <FindAll>Find All</FindAll>
            <Check><input type="checkbox" />Match Case</Check>
            <Tools items={["|", { n: "Find and Replace", g: findReplace }, "|"]} />
            <Combo $w={149}>
              <svg width="24" height="20" viewBox="0 0 24 20" fill="none" aria-hidden="true"><path d="M11.500 2.500h11v15h-11z" fill="#f0f0f0" stroke="#aaa" /><path d="M14 12h6v4h-6z" fill="#d5d5d5" /></svg>
              <select aria-label="Navigate By" style={{ paddingLeft: 7 }}><option>Page</option></select>
              <ComboArrow $bare><Tri c={ink} w={10} /></ComboArrow>
            </Combo>
            <Tools items={[
              { n: "Previous Page", g: <g fill={ink}>{up}</g> },
              { n: "Next Page", g: <g fill={ink} transform="rotate(180 12 12)">{up}</g> },
              "|",
            ]} />
          </Toolbar>
          <Toolbar><Handle /><Tools items={drawing} /></Toolbar>

          <StatusBar>
            <Cell $w={160}>Page 1 of 2</Cell>
            <Cell $w={242}>96 words, 672 characters</Cell>
            <Cell $w={176}>Default Style</Cell>
            <Cell $w={180} $center>English (India)</Cell>
            <Cell $w={68} />
            <Cell $w={29} $center><svg width="16" height="14" fill="none"><path d="M1 2.500h6M4 2v9M9 10.500h6" stroke="#999" /></svg></Cell>
            <Cell $w={30} $center><svg width="14" height="14"><path d="M1 1h12v12H1z" fill="#ddd" stroke="#888" /><path d="M5.500 3h3v3H11l-4 4-4-4h2.500z" fill="#444" /></svg></Cell>
            <Cell $w={28} />
            <Cell $w={114} $grow />
            <Cell $w={76} $center>
              <svg width="56" height="14" fill="none" strokeWidth="1.500"><path d="M2 13V2h4l4 3v8z" stroke="#d9620f" /><path d="M17 13V2h3l3 3v8zM26 13V2h3l4 3v8zM41 13V5l3-3h4v11M48 2h3l4 3v8" stroke="#999" /></svg>
            </Cell>
            <Cell $w={143} $center>
              <svg width="122" height="14" fill="none"><path d="M0 8.500h9M15 8.500h97M27 5v7M113 8.500h9M117.500 4v9" stroke="#8f8d8e" /><circle cx="63" cy="8" r="5" fill="#f4f2f3" stroke="#8f8d8e" /></svg>
            </Cell>
            <Cell $w={45}>100%</Cell>
          </StatusBar>
        </Window>
      </Body>

      <Gallery aria-label="Participants">
        {names.map((p) => (
          <Tile key={p.name}>
            {p.name}
            {p.muted && <Muted><MicOff c="#ee3446" /></Muted>}
          </Tile>
        ))}
        <More aria-label="Show more participants"><svg width="20" height="14" fill="none"><path d="M3 3l7 7 7-7" stroke="#fff" strokeWidth="3" /></svg></More>
      </Gallery>

      <ShareFrame />
      <Shield><svg width="14" height="15" viewBox="0 0 14 15" fill="none"><path d="M7 0l6.500 2.500v5q0 5-6.500 7-6.500-2-6.500-7v-5z" fill="#10e05c" /><path d="M4 7l2.500 2.500L10.500 5" stroke="#1a1a1d" strokeWidth="1.500" /></svg></Shield>
      <ShareBanner>
        <Viewing>You are viewing Snehal Ghodmare's screen<MicOff c="#17401b" s={12} /></Viewing>
        <ViewOptions>View Options<svg width="12" height="8" fill="none"><path d="M1 1l5 5 5-5" stroke="#e6e6e6" strokeWidth="2" /></svg></ViewOptions>
      </ShareBanner>
      <ViewMode>
        <svg width="14" height="14" viewBox="0 0 14 14" fill="#d9d9d9"><path d="M1 1h3v3H1zM6 1h3v3H6zM10.500 1h3v3h-3zM1 5.500h12.500V14H1z" /></svg>
        View
      </ViewMode>
    </Screen>
  );
}
